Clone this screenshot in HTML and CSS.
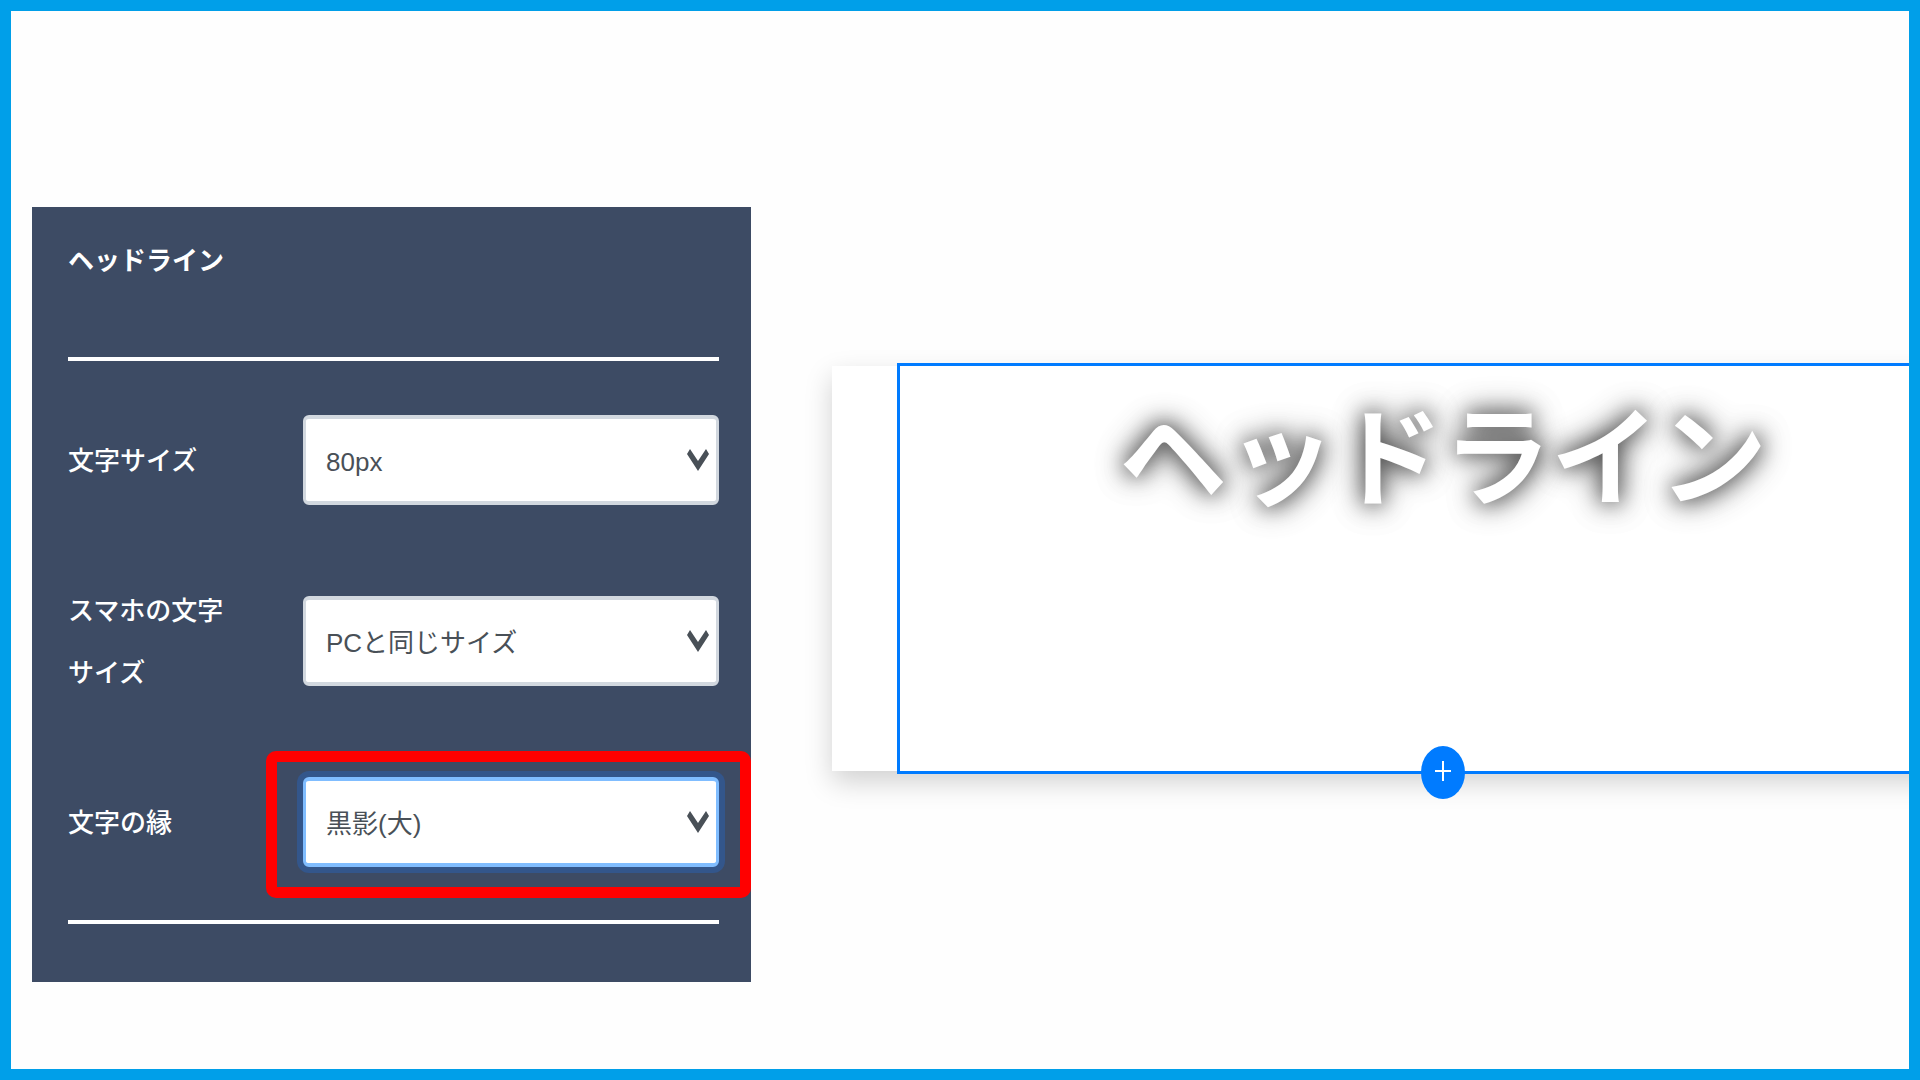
FILE: index.html
```html
<!DOCTYPE html>
<html lang="ja">
<head>
<meta charset="utf-8">
<title>ヘッドライン</title>
<link rel="stylesheet" href="styles.css">
</head>
<body>
<main class="frame">
  <form class="panel">
    <h2 class="panel-title">ヘッドライン</h2>
    <div class="fields">
      <div class="field">
        <label class="field-label" for="size">文字サイズ</label>
        <div class="select-wrap">
          <select class="select" id="size"><option>80px</option></select>
          <svg class="chevron" viewBox="0 0 22 22" aria-hidden="true"><path d="M3 0L11 12L19 0L22 5L11 22L0 5Z"/></svg>
        </div>
      </div>
      <div class="field">
        <label class="field-label" for="size-sp">スマホの文字サイズ</label>
        <div class="select-wrap">
          <select class="select" id="size-sp"><option>PCと同じサイズ</option></select>
          <svg class="chevron" viewBox="0 0 22 22" aria-hidden="true"><path d="M3 0L11 12L19 0L22 5L11 22L0 5Z"/></svg>
        </div>
      </div>
      <div class="field">
        <label class="field-label" for="outline">文字の縁</label>
        <div class="select-wrap select-wrap--marked">
          <select class="select select--active" id="outline"><option>黒影(大)</option></select>
          <svg class="chevron" viewBox="0 0 22 22" aria-hidden="true"><path d="M3 0L11 12L19 0L22 5L11 22L0 5Z"/></svg>
        </div>
      </div>
    </div>
  </form>
  <section class="card">
    <div class="block">
      <h1 class="headline">ヘッドライン</h1>
      <button class="add" type="button" aria-label="追加">
        <svg class="add-icon" viewBox="0 0 16 20" aria-hidden="true"><path d="M8 0V20M0 10H16"/></svg>
      </button>
    </div>
  </section>
</main>
</body>
</html>
```
FILE: styles.css
```css
* {
  box-sizing: border-box;
}

body {
  margin: 0;
  background: #fff;
  font-family: "Liberation Sans", "Noto Sans CJK JP", sans-serif;
  font-size: 26px;
}

.frame {
  display: grid;
  grid-template-columns: 719fr 1077fr;
  column-gap: 81px;
  align-items: start;
  min-height: 100vh;
  padding: 196px 0 86px 21px;
  border: 11px solid #009fe9;
  background: #fefefe;
  overflow: hidden;
}

.panel {
  padding: 22px 32px 58px 36px;
  background: #3d4b64;
  color: #fff;
}

.panel-title {
  margin: 0 0 64px;
  font-size: 26px;
  font-weight: 700;
  line-height: 64px;
}

.fields {
  display: grid;
  row-gap: 73px;
  padding: 54px 0 53px;
  border-top: 4px solid #fff;
  border-bottom: 4px solid #fff;
}

.field {
  display: grid;
  grid-template-columns: 160px 1fr;
  column-gap: 75px;
  align-items: center;
}

.field-label {
  padding-top: 2px;
  font-weight: 500;
  line-height: 62px;
}

.select-wrap {
  position: relative;
}

.select {
  display: block;
  width: 100%;
  height: 90px;
  padding: 4px 48px 0 20px;
  border: 4px solid #d2d8df;
  border-width: 4px 3px;
  border-radius: 6px;
  appearance: none;
  background: #fff;
  color: #495057;
  font: inherit;
}

.select--active {
  border-color: #80bdff;
  outline: 0;
  box-shadow: 0 0 0 6px #33568b;
}

.chevron {
  position: absolute;
  top: 34px;
  right: 10px;
  width: 22px;
  height: 22px;
  fill: #495057;
  pointer-events: none;
}

.select-wrap--marked::after {
  content: "";
  position: absolute;
  inset: -26px -32px -31px -37px;
  border: 11px solid #f00;
  border-radius: 10px;
  pointer-events: none;
}

.card {
  margin: 159px -145px 0 0;
  padding: 0 65px;
  background: #fff;
  box-shadow: 0 11px 26px rgba(0, 0, 0, 0.18);
}

.block {
  position: relative;
  min-height: 411px;
  margin: -3px 0;
  padding-top: 14px;
  border: 3px solid #007bff;
}

.headline {
  margin: 0;
  color: #fff;
  font-size: 108px;
  font-weight: 700;
  line-height: 160px;
  text-align: center;
  text-shadow: 0 0 20px rgba(0, 0, 0, 0.5), 0 0 28px rgba(0, 0, 0, 0.5), 0 0 36px rgba(0, 0, 0, 0.3);
}

.add {
  position: absolute;
  bottom: -28px;
  left: calc(50% - 22px);
  display: grid;
  place-items: center;
  width: 44px;
  height: 53px;
  padding: 0 0 4px;
  border: 0;
  border-radius: 50%;
  background: #007bff;
}

.add-icon {
  width: 16px;
  height: 20px;
}

.add-icon path {
  stroke: #fff;
  stroke-width: 2;
}
```
